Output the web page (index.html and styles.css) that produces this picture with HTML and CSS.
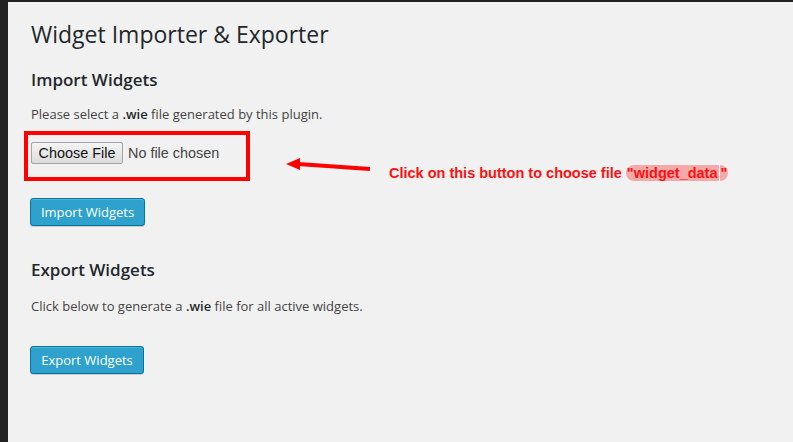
FILE: index.html
```html
<!DOCTYPE html>
<html>
<head>
<meta charset="utf-8">
<link rel="stylesheet" href="styles.css">
</head>
<body>
<div class="topbar"></div>
<div class="layout">
  <div class="sidebar"></div>
  <main class="wrap">
    <h1 class="title">Widget Importer &amp; Exporter</h1>
    <h2 class="section-title first">Import Widgets</h2>
    <p class="desc">Please select a <b>.wie</b> file generated by this plugin.</p>
    <div class="file-row">
      <span class="file-btn">Choose File</span>
      <span class="file-name">No file chosen</span>
    </div>
    <button class="btn-primary import">Import Widgets</button>
    <h2 class="section-title export">Export Widgets</h2>
    <p class="desc export-desc">Click below to generate a <b>.wie</b> file for all active widgets.</p>
    <button class="btn-primary export-btn">Export Widgets</button>

    <div class="note-box"></div>
    <svg class="note-arrow" width="90" height="16" viewBox="0 0 90 16">
      <polygon points="0,6 14,0 14,12" fill="#ff0000"/>
      <line x1="12" y1="6" x2="84" y2="11" stroke="#ff0000" stroke-width="4"/>
    </svg>
    <div class="note-text">Click on this button to choose file <span class="hl">"widget_data<span class="caret"></span>"</span></div>
  </main>
</div>
</body>
</html>
```
FILE: styles.css
```css
* { box-sizing: border-box; }
html, body { margin: 0; padding: 0; }
body {
  background: #f1f1f1;
  font-family: "Open Sans", "Liberation Sans", sans-serif;
  color: #444;
  width: 793px;
  height: 442px;
  overflow: hidden;
}
.topbar { height: 2px; background: #222; }
.layout { display: flex; height: 440px; }
.sidebar { width: 8px; background: #222; flex: none; }
.wrap {
  position: relative;
  flex: 1;
  padding-left: 22px;
}
.title {
  margin: 18px 0 0 1px;
  font-size: 23px;
  font-weight: 400;
  line-height: 29px;
  color: #23282d;
}
.section-title {
  margin: 19px 0 0 1px;
  font-size: 17px;
  font-weight: 600;
  line-height: 24px;
  color: #23282d;
}
.section-title.export { margin-top: 32px; }
.desc {
  margin: 12px 0 0 1px;
  font-size: 13px;
  line-height: 20px;
  color: #444;
}
.desc b { font-weight: 600; color: #23282d; }
.export-desc { margin-top: 14px; }
.file-row {
  margin: 18px 0 0 1px;
  display: flex;
  align-items: center;
  height: 22px;
  font-family: "Liberation Sans", Arial, sans-serif;
  font-size: 14.4px;
}
.file-btn {
  display: inline-flex;
  align-items: center;
  height: 22px;
  width: 92px;
  justify-content: center;
  border: 1px solid #a3a3a3;
  border-radius: 2px;
  background: linear-gradient(#f4f4f4, #dcdcdc);
  color: #111;
  white-space: nowrap;
}
.file-name { margin-left: 5px; color: #444; white-space: nowrap; }
.btn-primary {
  display: block;
  height: 28px;
  padding: 0 0 1px;
  border: 1px solid #0074a2;
  border-radius: 3px;
  background: #2ea2cc;
  box-shadow: inset 0 1px 0 rgba(120,200,230,.5), 0 1px 0 rgba(0,0,0,.15);
  color: #fff;
  font-family: "Open Sans", "Liberation Sans", sans-serif;
  font-size: 13px;
  line-height: 26px;
  white-space: nowrap;
  text-align: center;
  cursor: pointer;
}
.import { margin-top: 34px; width: 115px; }
.export-btn { margin-top: 30px; width: 114px; }

.note-box {
  position: absolute;
  left: 16px;
  top: 129px;
  width: 226px;
  height: 50px;
  border: 4px solid #ff0000;
}
.note-arrow {
  position: absolute;
  left: 278px;
  top: 156px;
}
.note-text {
  position: absolute;
  left: 381px;
  top: 162px;
  font-family: "Liberation Sans", Arial, sans-serif;
  font-weight: 700;
  font-size: 14.5px;
  line-height: 18px;
  color: #ff1010;
  white-space: nowrap;
}
.hl {
  background: #f5a9a9;
  border-radius: 9px;
  padding: 0 1px;
}
.caret {
  display: inline-block;
  width: 1px;
  height: 18px;
  background: #fff;
  vertical-align: top;
  margin: 0 1px;
}
```
